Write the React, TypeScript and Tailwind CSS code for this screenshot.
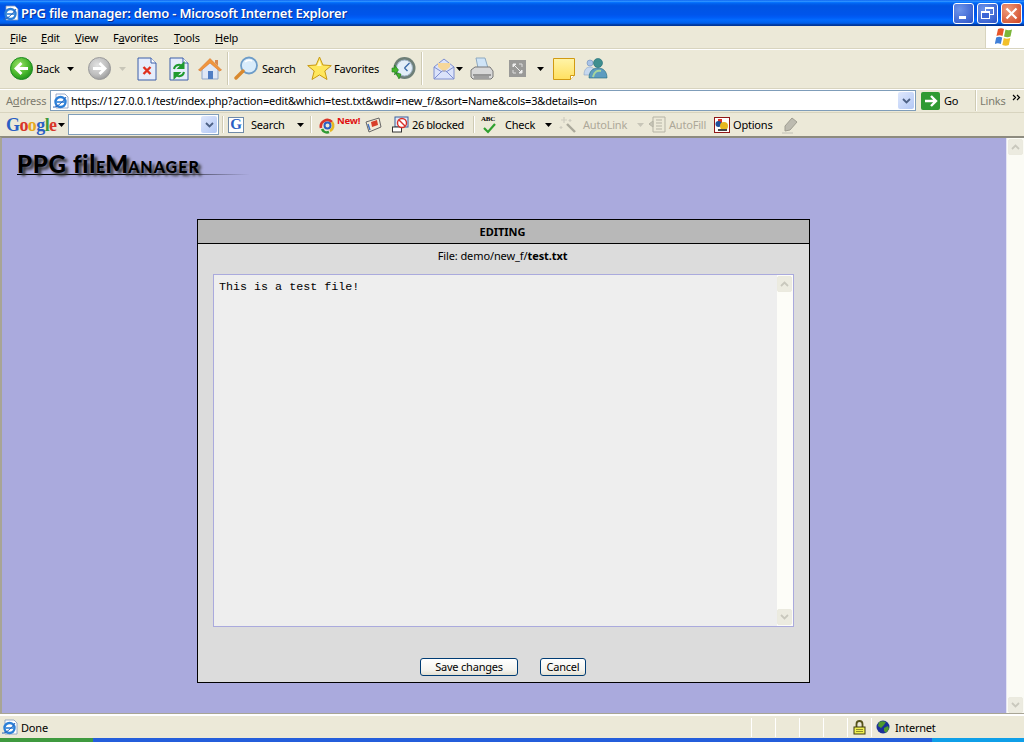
import React from 'react';

const Caret = ({ className = 'ml-[3px]', color = '#000' }: { className?: string; color?: string }) => (
  <svg width="7" height="4" viewBox="0 0 7 4" className={className}>
    <path d="M0 0h7L3.5 4z" fill={color} />
  </svg>
);

const Sep = ({ className }: { className: string }) => <div className={`w-px self-stretch bg-[#cfcbb4] shadow-[1px_0_0_#fff] ${className}`} />;

const CircleArrow = ({ gray }: { gray?: boolean }) => (
  <svg width="23" height="23" viewBox="0 0 23 23">
    <defs>
      <radialGradient id={gray ? 'cg' : 'cb'} cx="40%" cy="35%" r="75%">
        <stop offset="0" stopColor={gray ? '#e2e2e2' : '#9fe36a'} />
        <stop offset="0.6" stopColor={gray ? '#bdbdbd' : '#45b52a'} />
        <stop offset="1" stopColor={gray ? '#8f8f8f' : '#14851a'} />
      </radialGradient>
    </defs>
    <circle cx="11.5" cy="11.5" r="11" fill={`url(#${gray ? 'cg' : 'cb'})`} stroke={gray ? '#9a9a9a' : '#1d8a22'} />
    {gray ? (
      <path d="M5 11.5h11M11.5 6l5.5 5.5-5.5 5.5" fill="none" stroke="#fff" strokeWidth="2.8" />
    ) : (
      <path d="M18 11.5H7M11.5 6L6 11.5l5.5 5.5" fill="none" stroke="#fff" strokeWidth="2.8" />
    )}
  </svg>
);

const PageIcon = ({ children }: { children: React.ReactNode }) => (
  <svg width="20" height="24" viewBox="0 0 20 24">
    <path d="M1 1h13l5 5v17H1z" fill="#e6edfb" stroke="#3c5ea8" />
    <path d="M14 1v5h5" fill="#fff" stroke="#3c5ea8" />
    {children}
  </svg>
);

const HomeIcon = () => (
  <svg width="24" height="24" viewBox="0 0 24 24">
    <path d="M4 11l8-6 8 6v11H4z" fill="#dfe8f6" stroke="#8fa7c9" />
    <path d="M0.5 13L12 1.5 23.5 13l-2 1L12 6 2.5 14z" fill="#f0963c" stroke="#d9722a" strokeWidth="0.6" />
    <path d="M17 3h3v6l-3-3z" fill="#d98a52" />
    <rect x="10" y="14" width="5" height="8" fill="#4f7ec4" />
  </svg>
);

const SearchIconXp = () => (
  <svg width="25" height="25" viewBox="0 0 25 25">
    <circle cx="15" cy="9.5" r="8" fill="#d9ecfb" stroke="#6d9cc8" strokeWidth="1.8" />
    <path d="M11 6c2-2 5-2 7-1" stroke="#fff" strokeWidth="1.6" fill="none" />
    <path d="M9 15l-7 7" stroke="#d9892e" strokeWidth="3.4" strokeLinecap="round" />
  </svg>
);

const StarIcon = () => (
  <svg width="25" height="25" viewBox="0 0 25 25">
    <path d="M12.5 1l3.4 8 8.4.6-6.5 5.4 2.2 8.5-7.5-4.6-7.5 4.6 2.2-8.5L.7 9.6 9.1 9z" fill="#ffe75c" stroke="#c99a12" />
    <path d="M12.5 4l2 6h-4.500z" fill="#fff8c4" />
  </svg>
);

const HistoryIcon = () => (
  <svg width="25" height="25" viewBox="0 0 25 25">
    <circle cx="13.500" cy="12" r="11" fill="#6e7f78" />
    <circle cx="13.500" cy="12" r="8" fill="#e3eef8" stroke="#9fb3c6" />
    <path d="M13.500 12l5-5M13.500 12l3 3" stroke="#3b6aa8" strokeWidth="1.400" />
    <path d="M1 12h3l-.500-3 4 5-4 5 .500-3H1zM5 17l5 1-2 5z" fill="#45b52a" stroke="#1c7d1f" strokeWidth="0.600" />
  </svg>
);

const MailIcon = () => (
  <svg width="22" height="24" viewBox="0 0 22 24">
    <path d="M1 10L11 2l10 8v12H1z" fill="#dbe3fa" stroke="#7f8fd0" />
    <path d="M5 10V6h12v4l-6 5z" fill="#f6d79a" />
    <path d="M1 22l8-8h4l8 8M1 10l8 5M21 10l-8 5" fill="none" stroke="#7f8fd0" />
  </svg>
);

const PrinterIcon = () => (
  <svg width="24" height="24" viewBox="0 0 24 24">
    <path d="M6 1h9l3 10H8z" fill="#cfe4f7" stroke="#8ea9c0" />
    <path d="M1 13l4-3h15l3 4v6l-2 2H3l-2-2z" fill="#d8d8d8" stroke="#777" />
    <path d="M3 18h18" stroke="#555" />
    <rect x="4" y="19" width="15" height="3" fill="#a0a0a0" />
  </svg>
);

const NoteIcon = () => (
  <svg width="22" height="22" viewBox="0 0 22 22">
    <defs>
      <linearGradient id="note" x1="0" y1="0" x2="0" y2="1">
        <stop offset="0" stopColor="#fff4a8" />
        <stop offset="1" stopColor="#ffe060" />
      </linearGradient>
    </defs>
    <path d="M.5.5h21v17l-4 4H.5z" fill="url(#note)" stroke="#d19a12" />
    <path d="M17.500 21.500v-4h4" fill="#fff" stroke="#d19a12" />
  </svg>
);

const MessengerIcon = () => (
  <svg width="25" height="21" viewBox="0 0 25 21">
    <circle cx="7" cy="5" r="3" fill="#a9c4e8" stroke="#6d8cb8" strokeWidth="0.600" />
    <path d="M1 17c0-6 3-8 6-8s5 2 5 8z" fill="#c6d8ee" stroke="#8aa5c8" strokeWidth="0.600" />
    <circle cx="15" cy="5" r="4.500" fill="#3f8f8f" stroke="#1f6a78" strokeWidth="0.600" />
    <path d="M6 20c0-7 4-10 9-10s9 3 9 10z" fill="#5d9cc0" stroke="#1f6a78" strokeWidth="0.600" />
    <path d="M10 19c1-5 4-7 8-6" stroke="#a9d69a" strokeWidth="2" fill="none" />
  </svg>
);

const IeIcon = () => (
  <svg width="16" height="16" viewBox="0 0 16 16">
    <path d="M3 1h9l3 3v11H3z" fill="#fff" stroke="#7f96bd" strokeWidth="0.800" />
    <circle cx="7.500" cy="9" r="5" fill="#fff" stroke="#2b7fd8" strokeWidth="2.400" />
    <path d="M3.500 9h8" stroke="#2b7fd8" strokeWidth="1.600" />
    <path d="M0 14c3 1 9-4 13-10" stroke="#2560b8" strokeWidth="1" fill="none" />
  </svg>
);

const WinLogo = () => (
  <svg width="20" height="19" viewBox="0 0 20 19">
    <path d="M3 1c2-1 4-1 6 0L7.500 8c-2-1-4-1-6 0z" fill="#e8562a" />
    <path d="M10.500 1.500c2 1 4 1 6.500 0L15.500 8.500c-2 1-4 1-6.500 0z" fill="#7cb63a" />
    <path d="M1.200 9.500c2-1 4-1 6 0L5.800 16c-2-1-4-1-6 0z" fill="#3f7fd8" />
    <path d="M8.800 10c2 1 4 1 6.500 0L13.800 17c-2 1-4 1-6.500 0z" fill="#f2c02a" />
  </svg>
);

const DropBtn = ({ className }: { className: string }) => (
  <div className={`flex items-center justify-center rounded-[2px] bg-[linear-gradient(135deg,#dfe8fd,#b3c8f5)] ${className}`}>
    <svg width="9" height="6" viewBox="0 0 9 6">
      <path d="M1 1l3.500 3.500L8 1" fill="none" stroke="#4d6185" strokeWidth="1.800" />
    </svg>
  </div>
);

const ScrollBtn = ({ dir, className }: { dir: 'up' | 'down'; className?: string }) => (
  <div className={`flex h-[16px] w-[15px] items-center justify-center rounded-[2px] border border-[#ebeadf] bg-[#ecebe0] ${className ?? ''}`}>
    <svg width="9" height="6" viewBox="0 0 9 6">
      <path d={dir === 'up' ? 'M1 5l3.500-3.500L8 5' : 'M1 1l3.500 3.500L8 1'} fill="none" stroke="#c9c8bd" strokeWidth="1.800" />
    </svg>
  </div>
);

const Gbar = ({ children, className }: { children: React.ReactNode; className: string }) => <div className={`flex shrink-0 items-center ${className}`}>{children}</div>;

export default function App() {
  return (
    <div className="flex h-[742px] w-[1024px] flex-col overflow-hidden bg-[#ece9d8] font-['Noto_Sans',sans-serif] text-[11px] leading-none tracking-[-0.2px] text-black">
      {/* title bar */}
      <div className="flex h-[26px] shrink-0 items-center bg-[linear-gradient(180deg,#0058ee_0%,#3593ff_4%,#288eff_6%,#127dff_8%,#036ffc_10%,#0262ee_14%,#0057e5_20%,#0054e3_24%,#0055eb_56%,#005bf5_66%,#026afe_76%,#0062ef_86%,#0052d6_92%,#0040ab_94%,#003092_100%)] pl-[3px] pr-[2px]">
        <IeIcon />
        <span className="ml-[2px] text-[13px] font-semibold text-white [text-shadow:1px_1px_0_#0a2f8f]">PPG file manager: demo - Microsoft Internet Explorer</span>
        <div className="ml-auto flex gap-[3px]">
          <div className="flex h-[21px] w-[21px] items-end rounded-[3px] border border-white bg-[radial-gradient(circle_at_30%_30%,#6f95ea,#2a52c8)] pb-[4px] pl-[5px]">
            <div className="h-[3px] w-[7px] bg-white" />
          </div>
          <div className="relative h-[21px] w-[21px] rounded-[3px] border border-white bg-[radial-gradient(circle_at_30%_30%,#6f95ea,#2a52c8)]">
            <div className="absolute left-[7px] top-[3px] h-[8px] w-[9px] border border-t-2 border-white" />
            <div className="absolute left-[3px] top-[7px] h-[8px] w-[9px] border border-t-2 border-white bg-[#3d66d6]" />
          </div>
          <div className="flex h-[21px] w-[21px] items-center justify-center rounded-[3px] border border-white bg-[radial-gradient(circle_at_30%_30%,#ee9a7a,#cf4422)]">
            <svg width="13" height="13" viewBox="0 0 13 13">
              <path d="M1.500 1.500l10 10M11.500 1.500l-10 10" stroke="#fff" strokeWidth="2.200" />
            </svg>
          </div>
        </div>
      </div>

      {/* menu bar */}
      <div className="flex h-[23px] shrink-0 items-center border-b border-[#d8d4bf] pl-[10px]">
        <span className="w-[31px]"><u>F</u>ile</span>
        <span className="w-[34px]"><u>E</u>dit</span>
        <span className="w-[38px]"><u>V</u>iew</span>
        <span className="w-[61px]">F<u>a</u>vorites</span>
        <span className="w-[41px]"><u>T</u>ools</span>
        <span><u>H</u>elp</span>
        <div className="ml-auto flex h-full w-[39px] items-center justify-center border-l border-[#d8d4bf] bg-white">
          <WinLogo />
        </div>
      </div>

      {/* standard buttons */}
      <div className="flex h-[40px] shrink-0 items-center border-b border-[#d8d4bf] pl-[10px] shadow-[inset_0_1px_0_#fff]">
        <CircleArrow />
        <span className="ml-[3px] w-[27px]">Back</span>
        <Caret className="ml-[4px]" />
        <div className="ml-[14px]"><CircleArrow gray /></div>
        <Caret className="ml-[8px]" color="#c8c6b8" />
        <div className="ml-[11px]">
          <PageIcon>
            <path d="M6.500 10l7 7M13.500 10l-7 7" stroke="#e0301e" strokeWidth="2.400" />
          </PageIcon>
        </div>
        <div className="ml-[12px]">
          <PageIcon>
            <path d="M5 12a5 5 0 0 1 9-2M14.500 6.500V11h-4.500z" stroke="#1f9a2f" strokeWidth="2" fill="none" />
            <path d="M15 15a5 5 0 0 1-9 2M5.500 20.500V16H10z" stroke="#1f9a2f" strokeWidth="2" fill="none" />
          </PageIcon>
        </div>
        <div className="ml-[9px]"><HomeIcon /></div>
        <Sep className="my-[3px] ml-[5px]" />
        <div className="ml-[6px]"><SearchIconXp /></div>
        <span className="ml-[3px] w-[36px]">Search</span>
        <div className="ml-[9px]"><StarIcon /></div>
        <span className="ml-[2px] w-[48px]">Favorites</span>
        <div className="ml-[9px]"><HistoryIcon /></div>
        <Sep className="my-[3px] ml-[5px]" />
        <div className="ml-[11px]"><MailIcon /></div>
        <Caret className="ml-[1px]" />
        <div className="ml-[7px]"><PrinterIcon /></div>
        <div className="ml-[15px] flex h-[17px] w-[17px] items-center justify-center bg-[#9a9a98]">
          <svg width="11" height="11" viewBox="0 0 11 11">
            <path d="M1 1h3L1 4zM10 10H7l3-3zM1 1l9 9" fill="#eee" stroke="#eee" />
            <path d="M7 1h3v3M1 7v3h3" fill="none" stroke="#ddd" />
          </svg>
        </div>
        <Caret className="ml-[11px]" />
        <div className="ml-[9px]"><NoteIcon /></div>
        <div className="ml-[8px]"><MessengerIcon /></div>
      </div>

      {/* address bar */}
      <div className="flex h-[24px] shrink-0 items-center border-b border-[#d8d4bf] pl-[6px] shadow-[inset_0_1px_0_#fff]">
        <span className="w-[44px] text-[#7d7b6e]">A<u>d</u>dress</span>
        <div className="flex h-[21px] w-[866px] items-center border border-[#7f9db9] bg-white pl-[2px] pr-px">
          <IeIcon />
          <span className="ml-[2px] text-[11px] tracking-[-0.21px]">https://127.0.0.1/test/index.php?action=edit&amp;which=test.txt&amp;wdir=new_f/&amp;sort=Name&amp;cols=3&amp;details=on</span>
          <DropBtn className="ml-auto h-[17px] w-[16px]" />
        </div>
        <div className="ml-[5px] flex h-[18px] w-[19px] items-center justify-center rounded-[2px] bg-[#2f9a33]">
          <svg width="14" height="12" viewBox="0 0 14 12">
            <path d="M1 6h10M7 1l5 5-5 5" fill="none" stroke="#fff" strokeWidth="2.400" />
          </svg>
        </div>
        <span className="ml-[4px] w-[31px]">Go</span>
        <Sep className="my-[1px]" />
        <span className="ml-[4px] w-[32px] text-[#7d7b6e]">Links</span>
        <svg width="9" height="7" viewBox="0 0 9 7" className="mb-[6px]">
          <path d="M1 1l2.500 2.500L1 6M5 1l2.500 2.500L5 6" fill="none" stroke="#000" strokeWidth="1.200" />
        </svg>
      </div>

      {/* google toolbar */}
      <div className="flex h-[24px] shrink-0 items-center border-b border-[#8d8b7f] pl-[6px]">
        <span className="w-[49px] font-['Liberation_Serif',serif] text-[18px] font-bold tracking-[-0.6px]">
          <span className="text-[#2a5fc4]">G</span>
          <span className="text-[#d8362a]">o</span>
          <span className="text-[#e6a820]">o</span>
          <span className="text-[#2a5fc4]">g</span>
          <span className="text-[#3f9a3a]">l</span>
          <span className="text-[#d8362a]">e</span>
        </span>
        <Caret className="ml-[3px]" />
        <div className="ml-[3px] flex h-[21px] w-[151px] items-center justify-end border border-[#7f9db9] bg-white pr-px">
          <DropBtn className="h-[17px] w-[16px]" />
        </div>
        <Sep className="my-[3px] ml-[3px]" />
        <Gbar className="ml-[5px] h-[16px] w-[16px] justify-center border border-[#6f8aa8] bg-white">
          <span className="font-['Liberation_Serif',serif] text-[15px] font-bold text-[#2a5fc4]">G</span>
        </Gbar>
        <span className="ml-[7px] w-[35px]">Search</span>
        <Caret className="ml-[11px]" />
        <Sep className="my-[3px] ml-[6px]" />
        <svg width="17" height="17" viewBox="0 0 17 17" className="ml-[8px] mt-[2px]">
          <path d="M2 11a6.500 6.500 0 0 1 11-6" stroke="#d8362a" strokeWidth="2.600" fill="none" />
          <path d="M13 5a6 6 0 0 1-2 9" stroke="#e6b820" strokeWidth="2.600" fill="none" />
          <path d="M10 15a5.500 5.500 0 0 1-7-3" stroke="#2f9a33" strokeWidth="2.600" fill="none" />
          <circle cx="8.500" cy="8.500" r="3" fill="none" stroke="#2a5fc4" strokeWidth="2" />
        </svg>
        <span className="mb-[7px] ml-px w-[24px] text-[9.5px] font-bold text-[#e01010]">New!</span>
        <svg width="17" height="16" viewBox="0 0 17 16" className="ml-[4px]">
          <path d="M1 5l13-4 2 9-12 5z" fill="#f3ecd8" stroke="#666" />
          <path d="M6 5l6-2 1 5-6 2z" fill="#d8402a" />
          <path d="M3 7l2 6" stroke="#3f6fc0" strokeWidth="1.400" />
        </svg>
        <svg width="17" height="17" viewBox="0 0 17 17" className="ml-[10px]">
          <rect x="3" y="1" width="13" height="10" fill="#dfe8f8" stroke="#3b5f9a" />
          <rect x="0.500" y="11" width="9" height="5" fill="#fff" stroke="#333" />
          <circle cx="10" cy="7" r="4.500" fill="#fff" stroke="#d8302a" strokeWidth="1.400" />
          <path d="M7 4l6 6" stroke="#d8302a" strokeWidth="1.400" />
        </svg>
        <span className="ml-[3px] w-[58px] tracking-[-0.4px]">26 blocked</span>
        <Sep className="my-[3px] ml-[3px]" />
        <div className="relative ml-[7px] h-[18px] w-[17px]">
          <span className="absolute left-0 top-0 font-['Liberation_Serif',serif] text-[7px] font-bold">ABC</span>
          <svg width="15" height="11" viewBox="0 0 15 11" className="absolute left-px top-[7px]">
            <path d="M2 5l4 4 7-8" fill="none" stroke="#2fa02f" strokeWidth="2.200" />
          </svg>
        </div>
        <span className="ml-[7px] w-[33px]">Check</span>
        <Caret className="ml-[7px]" />
        <svg width="17" height="17" viewBox="0 0 17 17" className="ml-[7px]">
          <path d="M8 8l8 8" stroke="#aaa89a" strokeWidth="2.400" />
          <path d="M5 1v6M2 4h6M11 3v3M9.500 4.500h3M2 10v3M.500 11.500h3" stroke="#cfcdc0" strokeWidth="1.200" />
        </svg>
        <span className="ml-[7px] w-[45px] text-[#aca899]">AutoLink</span>
        <Caret className="ml-[9px]" color="#c8c6b8" />
        <svg width="17" height="17" viewBox="0 0 17 17" className="ml-[5px]">
          <path d="M4 1h12v15H4z" fill="none" stroke="#b5b3a5" />
          <path d="M7 4h6M7 7h6M7 10h6M7 13h6M0 8l4-3v6z" stroke="#b5b3a5" fill="#c8c6b8" />
        </svg>
        <span className="ml-[3px] w-[41px] text-[#aca899]">AutoFill</span>
        <div className="ml-[4px] flex h-[16px] w-[16px] items-center justify-center border border-[#8f1616] bg-white">
          <svg width="14" height="14" viewBox="0 0 14 14">
            <rect x="3" y="1" width="4" height="4" fill="#d8302a" />
            <circle cx="3.500" cy="6" r="3" fill="#1f4f9a" />
            <circle cx="9" cy="8" r="4" fill="#e6b820" />
            <rect x="3" y="11" width="9" height="2" fill="#444" />
          </svg>
        </div>
        <span className="ml-[3px] w-[48px]">Options</span>
        <svg width="18" height="18" viewBox="0 0 18 18">
          <path d="M4 10l7-8 5 4-7 8-5 1z" fill="#bdbbb0" stroke="#a09e92" />
          <path d="M1 17h11" stroke="#cfcdc0" strokeWidth="1.400" />
        </svg>
      </div>

      {/* page */}
      <div className="flex min-h-0 flex-1 border-l-2 border-t border-[#a8a595] border-t-[#8d8b7f]">
        <div className="flex min-w-0 flex-1 flex-col bg-[#aaaadd]">
          <div className="ml-[15px] mt-[14px] h-[67px]">
            <div className="flex h-[22px] items-baseline font-['Lato',sans-serif] font-black tracking-normal text-black [text-shadow:3px_3px_3px_#333]">
              <span className="text-[24px] tracking-[0.7px]">PPG fil</span>
              <span className="text-[16px]">E</span>
              <span className="text-[24px]">M</span>
              <span className="text-[16px] tracking-[1px]">ANAGER</span>
            </div>
            <div className="h-px w-[233px] bg-[linear-gradient(90deg,#000_0%,#000_55%,#aaaadd_100%)]" />
          </div>
          <div className="ml-[195px] flex h-[464px] w-[613px] flex-col border border-black bg-[#dcdcdc]">
            <div className="flex h-[24px] shrink-0 items-center justify-center border-b border-black bg-[#b8b8b8] pr-[2px] text-[11px] font-bold tracking-normal">EDITING</div>
            <div className="flex h-[30px] shrink-0 items-center justify-center pb-[7px] pr-[2px] tracking-[-0.1px]">
              File: demo/new_f/<b>test.txt</b>
            </div>
            <div className="mx-[15px] flex h-[353px] w-[581px] shrink-0 border border-[#aaaadd] bg-[#eeeeee]">
              <div className="flex-1 pl-[5px] pt-[6px] font-['Liberation_Mono',monospace] text-[11.7px] leading-[13px] tracking-normal">This is a test file!</div>
              <div className="flex w-[16px] flex-col justify-between bg-[#fdfdf8] py-px">
                <ScrollBtn dir="up" />
                <ScrollBtn dir="down" />
              </div>
            </div>
            <div className="mt-[31px] flex items-center pl-[222px]">
              <button className="h-[18px] w-[98px] rounded-[3px] border border-[#003c74] bg-[linear-gradient(180deg,#fff,#f4f3ee_70%,#e3e0d2)] pb-px text-[11px]">Save changes</button>
              <button className="ml-[22px] h-[18px] w-[46px] rounded-[3px] border border-[#003c74] bg-[linear-gradient(180deg,#fff,#f4f3ee_70%,#e3e0d2)] pb-px text-[11px]">Cancel</button>
            </div>
          </div>
        </div>
        <div className="flex w-[18px] shrink-0 flex-col justify-between border-l border-[#e4e4f4] bg-[#fbfbf5] py-px pl-px">
          <ScrollBtn dir="up" />
          <ScrollBtn dir="down" />
        </div>
      </div>

      {/* status bar */}
      <div className="flex h-[24px] shrink-0 items-center border-t-2 border-[#fff] bg-[#ece9d8] pl-[2px] shadow-[0_-1px_0_#a8a595]">
        <IeIcon />
        <span className="ml-[3px] w-[730px]">Done</span>
        <div className="h-[19px] w-[24px] border-l border-white" />
        <div className="h-[19px] w-[24px] border-l border-white" />
        <div className="h-[19px] w-[24px] border-l border-white" />
        <div className="h-[19px] w-[24px] border-l border-white" />
        <div className="flex h-[19px] w-[24px] items-center justify-center border-l border-white">
          <svg width="13" height="15" viewBox="0 0 13 15">
            <path d="M3.500 7V4a3 3 0 0 1 6 0v3" fill="none" stroke="#55521a" strokeWidth="1.800" />
            <rect x="1" y="7" width="11" height="7" fill="#f0f050" stroke="#3f3c10" />
            <path d="M3 9.500h7M3 11.500h7" stroke="#8f8c2a" />
          </svg>
        </div>
        <div className="flex h-[19px] flex-1 items-center border-l border-white pl-[4px]">
          <svg width="14" height="14" viewBox="0 0 14 14">
            <circle cx="7" cy="7" r="6.500" fill="#1a2f9a" />
            <path d="M3 2c2-1 5-1 7 0L8 5 5 8 2 6zM8 8l4-2 1 3-3 4-2-2z" fill="#4f9a2f" />
          </svg>
          <span className="ml-[5px]">Internet</span>
        </div>
      </div>

      {/* taskbar sliver */}
      <div className="flex h-[4px] shrink-0">
        <div className="w-[93px] bg-[#3f9a3f]" />
        <div className="w-[839px] bg-[#245edb]" />
        <div className="flex-1 bg-[#0f9fe8]" />
      </div>
    </div>
  );
}
